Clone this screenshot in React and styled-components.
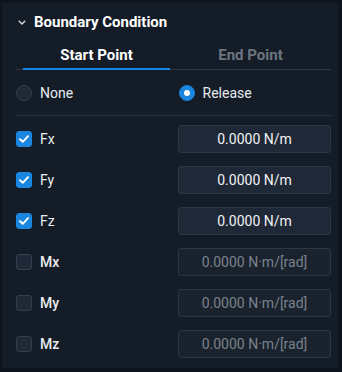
import React, { useState } from 'react'
import styled, { createGlobalStyle } from 'styled-components'

const Global = createGlobalStyle`
    html, body {
        margin: 0;
        padding: 0;
        background: #0e141d;
        font-family: Roboto, "Noto Sans", sans-serif;
        color: #e9ecef;
    }
`

const Panel = styled.div`
    width: 336px;
    height: 365px;
    margin: 3px 0 0 2px;
    box-sizing: border-box;
    padding: 0 7px 0 14px;
    background: #141c28;
    display: flex;
    flex-direction: column;
`

const Header = styled.div`
    height: 38px;
    display: flex;
    align-items: center;
    gap: 8px;
    padding-left: 2px;
    font-size: 15px;
    font-weight: 700;
    color: #ffffff;
`

const Tabs = styled.div`
    height: 28px;
    display: grid;
    grid-template-columns: 147px 1fr;
    padding-left: 7px;
    border-bottom: 1px solid #2e3846;
`

const Tab = styled.div`
    display: flex;
    align-items: center;
    justify-content: center;
    font-size: 15px;
    font-weight: 700;
    color: ${props => props.active ? '#ffffff' : '#6d757f'};
    border-bottom: 2px solid ${props => props.active ? '#1a86e0' : 'transparent'};
    margin-bottom: -1px;
    cursor: pointer;
`

const RadioRow = styled.div`
    height: 45px;
    display: grid;
    grid-template-columns: 1fr 1fr;
    gap: 10px;
    border-bottom: 1px solid #2a3340;
`

const Option = styled.label`
    display: flex;
    align-items: center;
    gap: 8px;
    font-size: 14px;
    color: #e9ecef;
    cursor: pointer;
`

const Radio = styled.span`
    width: 16px;
    height: 16px;
    border-radius: 50%;
    box-sizing: border-box;
    background: ${props => props.checked ? '#1a86e0' : '#202938'};
    border: 1px solid ${props => props.checked ? '#1a86e0' : '#333d4b'};
    display: flex;
    align-items: center;
    justify-content: center;
    &::after {
        content: '';
        width: 6px;
        height: 6px;
        border-radius: 50%;
        background: #ffffff;
        display: ${props => props.checked ? 'block' : 'none'};
    }
`

const List = styled.div`
    display: flex;
    flex-direction: column;
    gap: 13px;
    padding-top: 9px;
`

const Row = styled.div`
    height: 28px;
    display: grid;
    grid-template-columns: 1fr 153px;
    align-items: center;
`

const CheckLabel = styled.label`
    display: flex;
    align-items: center;
    gap: 8px;
    font-size: 14px;
    font-weight: ${props => props.bold ? 500 : 400};
    color: #e9ecef;
    cursor: pointer;
`

const Box = styled.span`
    width: 16px;
    height: 16px;
    box-sizing: border-box;
    border-radius: 3px;
    background: ${props => props.checked ? '#1a86e0' : '#202938'};
    border: 1px solid ${props => props.checked ? '#1a86e0' : '#333d4b'};
    display: flex;
    align-items: center;
    justify-content: center;
`

const Field = styled.div`
    height: 28px;
    box-sizing: border-box;
    border: 1px solid #2c3644;
    border-radius: 3px;
    background: ${props => props.disabled ? '#1a222e' : '#1f2836'};
    display: flex;
    align-items: center;
    justify-content: center;
    font-size: 14px;
    color: ${props => props.disabled ? '#7b838d' : '#f1f3f5'};
`

const Chevron = () => (
    <svg width="8" height="5" viewBox="0 0 8 5" fill="none">
        <path d="M0.8 0.8 L4 4 L7.2 0.8" stroke="#d8dde3" strokeWidth="1.3" />
    </svg>
)

const Check = () => (
    <svg width="10" height="8" viewBox="0 0 10 8" fill="none">
        <path d="M1 4.2 L3.8 6.8 L9 1.2" stroke="#ffffff" strokeWidth="1.9" strokeLinecap="round" strokeLinejoin="round" />
    </svg>
)

const rows = [
    { name: 'Fx', on: true, unit: 'N/m' },
    { name: 'Fy', on: true, unit: 'N/m' },
    { name: 'Fz', on: true, unit: 'N/m' },
    { name: 'Mx', on: false, unit: 'N·m/[rad]' },
    { name: 'My', on: false, unit: 'N·m/[rad]' },
    { name: 'Mz', on: false, unit: 'N·m/[rad]' },
]

const App = () => {
    const [tab, setTab] = useState(0)
    const [mode, setMode] = useState('release')

    return (
        <>
            <Global />
            <Panel>
                <Header>
                    <Chevron />
                    Boundary Condition
                </Header>
                <Tabs>
                    <Tab active={tab === 0} onClick={() => setTab(0)}>Start Point</Tab>
                    <Tab active={tab === 1} onClick={() => setTab(1)}>End Point</Tab>
                </Tabs>
                <RadioRow>
                    <Option onClick={() => setMode('none')}>
                        <Radio checked={mode === 'none'} />
                        None
                    </Option>
                    <Option onClick={() => setMode('release')}>
                        <Radio checked={mode === 'release'} />
                        Release
                    </Option>
                </RadioRow>
                <List>
                    {rows.map(r => (
                        <Row key={r.name}>
                            <CheckLabel bold={!r.on}>
                                <Box checked={r.on}>{r.on && <Check />}</Box>
                                {r.name}
                            </CheckLabel>
                            <Field disabled={!r.on}>0.0000 {r.unit}</Field>
                        </Row>
                    ))}
                </List>
            </Panel>
        </>
    )
}

export default App
